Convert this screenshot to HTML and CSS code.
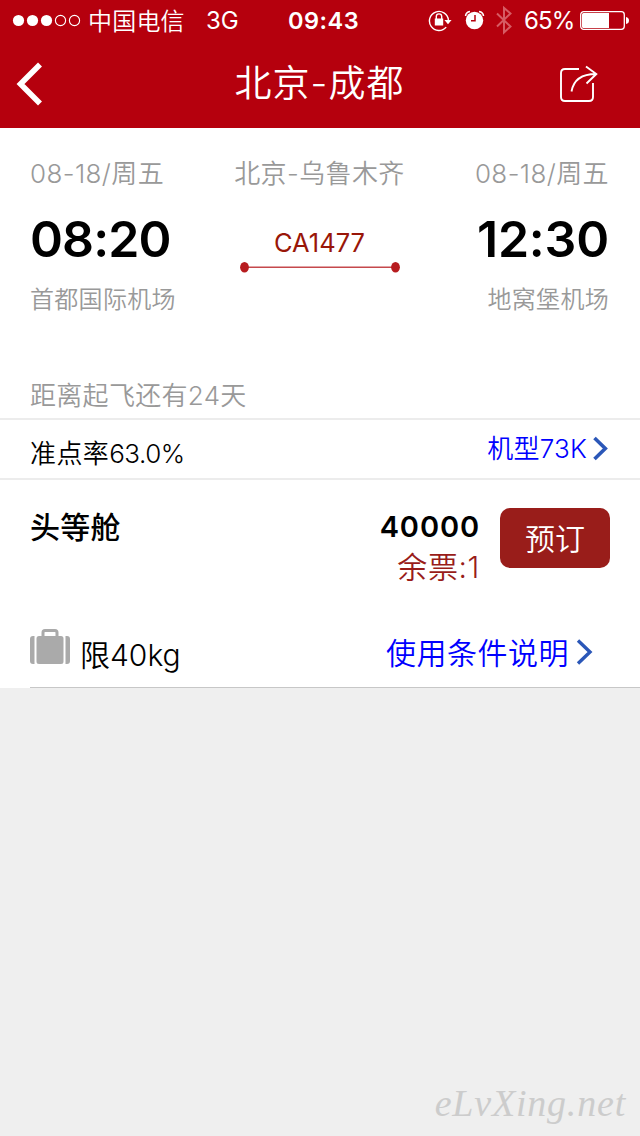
FILE: index.html
```html
<!DOCTYPE html>
<html lang="zh-CN">
<head>
<meta charset="utf-8">
<title>北京-成都</title>
<link rel="stylesheet" href="styles.css">
</head>
<body>
<header class="header">
  <div class="status">
    <svg class="signal" width="69" height="14" viewBox="0 0 69 14"><g fill="#fff"><circle cx="6.500" cy="6.500" r="5.600"/><circle cx="20.500" cy="6.500" r="5.600"/><circle cx="34.500" cy="6.500" r="5.600"/></g><g fill="none" stroke="#fff" stroke-width="1.100"><circle cx="48.500" cy="6.500" r="5.100"/><circle cx="62.500" cy="6.500" r="5.100"/></g></svg>
    <span class="carrier">中国电信</span>
    <span class="network">3G</span>
    <span class="clock">09:43</span>
    <svg class="indicators" width="88" height="30" viewBox="0 0 88 30">
      <g fill="none" stroke="#fff" stroke-width="1.400"><path d="M18.200 22.100A9.500 9.500 0 1 1 20.400 15"/><path d="M8.300 14v-2.400a2.700 2.700 0 0 1 5.400 0V14"/></g>
      <path d="M16.400 15h7.200L20 19.200zM6.800 13.600h8.400v7H6.800z" fill="#fff"/>
      <circle cx="46.500" cy="15.500" r="8.700" fill="#fff"/>
      <path d="M47 10v5.800h-4" fill="none" stroke="#b5000d" stroke-width="1.500"/>
      <path d="M37.600 11q.2-3.900 4.400-4.500M51 6.500q4.200.6 4.500 4.500" fill="none" stroke="#fff" stroke-width="1.600"/>
      <path d="M69 8.500l13.500 13L76 27.500V3l6.500 5.500L69 21.500" fill="none" stroke="#d65c64" stroke-width="2"/>
    </svg>
    <span class="percent">65%</span>
    <svg class="battery" width="50" height="20" viewBox="0 0 50 20"><rect x=".7" y=".7" width="43.600" height="17.600" rx="3" fill="none" stroke="#fff" stroke-width="1.300"/><path d="M2 3.500Q2 2 3.500 2H29v15H3.500Q2 17 2 15.500zM46 6q3 .5 3 3.500t-3 3.500z" fill="#fff"/></svg>
  </div>
  <div class="navbar">
    <svg width="28" height="44" viewBox="0 0 28 44"><path d="M25 2.500L5.500 22 25 41.500" fill="none" stroke="#fff" stroke-width="5.600"/></svg>
    <h1 class="title">北京-成都</h1>
    <svg width="40" height="40" viewBox="0 0 40 40"><path d="M19 5H5Q1 5 1 9v24Q1 37 5 37h24q4 0 4-4V19M11.500 27.500Q14.500 10 36 10M26 2.500L36.300 10 26.500 19.500" fill="none" stroke="#fff" stroke-width="1.900"/></svg>
  </div>
</header>
<main class="sheet">
  <section class="flight">
    <div class="stop">
      <div class="date">08-18/周五</div>
      <div class="time departs">08:20</div>
      <div class="airport">首都国际机场</div>
    </div>
    <div class="route">
      <div class="cities">北京-乌鲁木齐</div>
      <div class="number">CA1477</div>
      <svg width="160" height="12" viewBox="0 0 160 12"><path d="M5 6.300h150" stroke="#c5494c" stroke-width="1.600"/><g fill="#b71c1f"><ellipse cx="4.500" cy="6.300" rx="4.400" ry="5.200"/><ellipse cx="155.500" cy="6.300" rx="4.400" ry="5.200"/></g></svg>
    </div>
    <div class="stop arrival">
      <div class="date">08-18/周五</div>
      <div class="time">12:30</div>
      <div class="airport">地窝堡机场</div>
    </div>
  </section>
  <div class="countdown">距离起飞还有24天</div>
  <div class="details">
    <span class="punctual">准点率<span class="rate">63.0%</span></span>
    <a class="model">机型73K</a>
    <svg class="more" width="16" height="26" viewBox="0 0 16 26"><path d="M1.500 2L12.300 12.500 1.500 23" fill="none" stroke="#2b57b8" stroke-width="3.600"/></svg>
  </div>
  <section class="fare">
    <div class="offer">
      <h2 class="cabin">头等舱</h2>
      <div class="price"><div class="amount">40000</div><div class="left">余票:1</div></div>
      <button class="book">预订</button>
    </div>
    <div class="baggage">
      <svg class="case" width="40" height="36" viewBox="0 0 40 36"><g fill="#aaa"><path d="M3 7h1.500v28H3q-3 0-3-3V10q0-3 3-3zM37 7h-1.500v28H37q3 0 3-3V10q0-3-3-3zM9 7h22q2.500 0 2.500 2.500v23Q33.500 35 31 35H9q-2.500 0-2.500-2.500v-23Q6.500 7 9 7z"/></g><path d="M13 8V3.500q0-2 2-2h10q2 0 2 2V8" fill="none" stroke="#aaa" stroke-width="3"/></svg>
      <span class="limit">限40kg</span>
      <a class="terms">使用条件说明</a>
      <svg width="18" height="28" viewBox="0 0 18 28"><path d="M2 1.500L14 13 2 24.500" fill="none" stroke="#2b57b8" stroke-width="3.400"/></svg>
    </div>
  </section>
</main>
<footer class="brand">eLvXing.net</footer>
</body>
</html>
```
FILE: styles.css
```css
* { box-sizing: border-box; }
body { margin: 0; width: 640px; height: 1136px; background: #efefef; color: #000; font-family: Inter, "Noto Sans CJK SC", sans-serif; display: flex; flex-direction: column; overflow: hidden; white-space: nowrap; }
svg { display: block; flex: none; }
h1, h2 { margin: 0; }
.header { height: 128px; background: #b5000d; color: #fff; }
.status { height: 40px; display: flex; align-items: center; padding: 1px 0 0 12px; font-size: 24px; line-height: 39px; }
.carrier { width: 118px; padding: 1px 0 0 7px; font-weight: 350; letter-spacing: .2px; }
.network { width: 89px; padding-left: 7px; font-size: 24px; }
.clock { width: 140px; font-weight: 600; font-size: 23.5px; letter-spacing: .5px; }
.indicators { margin-bottom: 2px; }
.percent { width: 59px; padding-left: 8px; letter-spacing: -.9px; }
.battery { margin-left: 5px; }
.navbar { height: 88px; display: grid; grid-template-columns: 28px 1fr 40px; align-items: center; padding: 0 40px 0 15px; }
.title { padding-left: 36px; text-align: center; font-size: 37px; font-weight: 350; line-height: 82px; letter-spacing: 1.1px; }
.sheet { height: 560px; background: #fff; }
.flight { display: grid; grid-template-columns: 175px 1fr 175px; padding: 25px 31px 0 30px; height: 222px; }
.arrival { text-align: right; }
.date, .cities { height: 40px; line-height: 42px; font-size: 26px; font-weight: 350; color: #999; letter-spacing: .4px; }
.time { height: 92px; line-height: 93px; font-size: 50px; font-weight: 600; letter-spacing: -.2px; }
.departs { letter-spacing: -.9px; }
.airport { line-height: 30px; font-size: 24px; font-weight: 350; color: #999; letter-spacing: .3px; }
.route { display: flex; flex-direction: column; align-items: center; }
.number { margin-top: 30px; line-height: 40px; height: 38px; font-size: 25.5px; color: #991608; }
.countdown { height: 70px; padding: 26px 30px 0; line-height: 40px; font-size: 26px; font-weight: 350; color: #999; letter-spacing: .3px; border-bottom: 2px solid #ececec; }
.details { height: 60px; display: flex; align-items: center; padding: 0 31px 0 30px; border-bottom: 2px solid #ececec; font-size: 26px; font-weight: 350; }
.punctual { flex: 1; padding-top: 4px; letter-spacing: .4px; }
.rate { letter-spacing: -.5px; }
.model { color: #00f; padding-bottom: 6px; letter-spacing: .2px; }
.more { margin-left: 6px; }
.fare { height: 208px; padding: 28px 30px 0; }
.offer { display: flex; align-items: flex-start; height: 110px; }
.cabin { flex: 1; font-size: 30px; line-height: 38px; font-weight: 500; letter-spacing: .2px; }
.price { text-align: right; margin-right: 20px; }
.amount { font-size: 29px; font-weight: 600; line-height: 38px; letter-spacing: .9px; }
.left { font-size: 30px; font-weight: 350; line-height: 42px; color: #991c19; letter-spacing: .6px; }
.book { width: 110px; height: 60px; padding: 0; border: 0; border-radius: 10px; background: #991d1a; color: #fff; font: 350 30px/62px Inter, "Noto Sans CJK SC", sans-serif; }
.baggage { height: 70px; margin-right: -30px; padding-right: 46px; display: flex; align-items: center; border-bottom: 1px solid #c7c7c7; font-size: 30px; font-weight: 350; }
.case { margin-bottom: 11px; }
.limit { flex: 1; padding: 0 0 0 10px; }
.terms { color: #00f; margin-right: 7px; letter-spacing: .5px; padding-bottom: 4px; }
.brand { margin-top: auto; height: 66px; padding-right: 14px; text-align: right; color: #ccc; font: italic 38px/66px "Liberation Serif", cursive; letter-spacing: .8px; }
```
